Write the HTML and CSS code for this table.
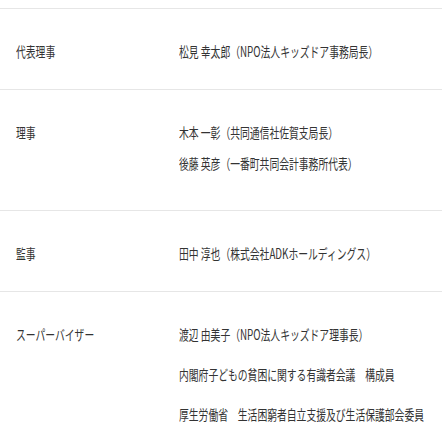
FILE: index.html
```html
<!DOCTYPE html>
<html lang="ja">
<head>
<meta charset="utf-8">
<link rel="stylesheet" href="styles.css">
</head>
<body>
<div class="board">
  <div class="row">
    <div class="label"><span class="t">代表理事</span></div>
    <div class="values">
      <div class="v"><span class="t">松見 幸太郎（NPO法人キッズドア事務局長）</span></div>
    </div>
  </div>
  <div class="row row-multi">
    <div class="label"><span class="t">理事</span></div>
    <div class="values">
      <div class="v"><span class="t">木本 一彰（共同通信社佐賀支局長）</span></div>
      <div class="v"><span class="t">後藤 英彦（一番町共同会計事務所代表）</span></div>
    </div>
  </div>
  <div class="row">
    <div class="label"><span class="t">監事</span></div>
    <div class="values">
      <div class="v"><span class="t">田中 淳也（株式会社ADKホールディングス）</span></div>
    </div>
  </div>
  <div class="row row-wide">
    <div class="label"><span class="t">スーパーバイザー</span></div>
    <div class="values">
      <div class="v"><span class="t">渡辺 由美子（NPO法人キッズドア理事長）</span></div>
      <div class="v"><span class="t">内閣府子どもの貧困に関する有識者会議　構成員</span></div>
      <div class="v"><span class="t">厚生労働省　生活困窮者自立支援及び生活保護部会委員</span></div>
    </div>
  </div>
</div>
</body>
</html>
```
FILE: styles.css
```css
html, body {
  margin: 0;
  padding: 0;
  background: #fff;
  overflow: hidden;
}
body {
  font-family: "Noto Sans CJK JP", "Noto Sans", sans-serif;
  font-size: 14px;
  color: #333;
}
.board {
  padding-top: 8px;
  overflow: hidden;
}
.row {
  display: grid;
  grid-template-columns: 163px 1fr;
  padding: 30px 0 26px 16px;
  border-top: 1px solid #e6e6e6;
  line-height: 24px;
}
.row-multi {
  padding-bottom: 35px;
}
.values {
  display: flex;
  flex-direction: column;
  gap: 7px;
  min-width: 0;
}
.row-wide .values {
  gap: 16px;
}
.label, .v {
  white-space: nowrap;
}
.t {
  display: inline-block;
  transform: scaleX(0.7);
  transform-origin: left center;
}
```
